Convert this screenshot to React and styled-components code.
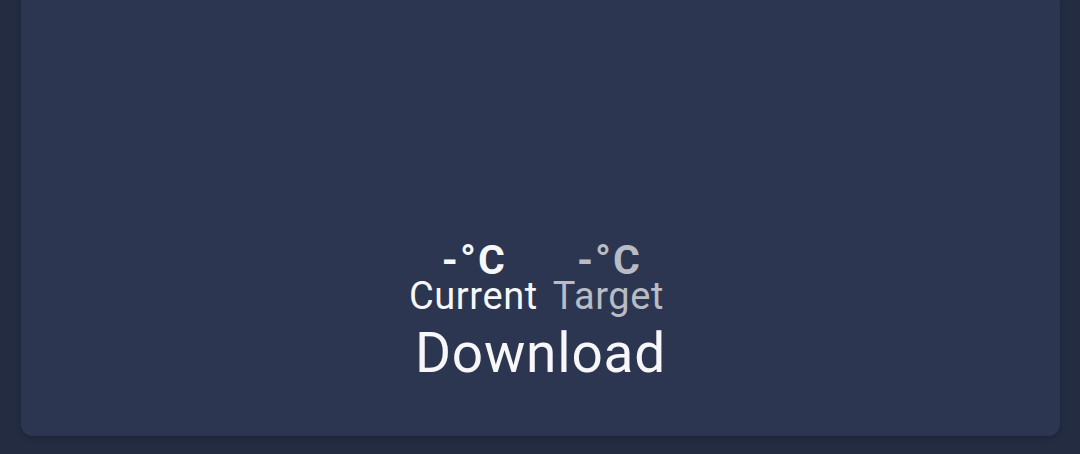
import React from 'react'
import styled, { createGlobalStyle } from 'styled-components'

const GlobalStyle = createGlobalStyle`
	html, body {
		margin: 0;
		padding: 0;
		background: #232c41;
		font-family: Roboto, "Noto Sans", "Liberation Sans", sans-serif;
	}
`

const Page = styled.div`
	width: 1080px;
	height: 454px;
	box-sizing: border-box;
	padding: 0 20px 18px 21px;
	display: flex;
	overflow: hidden;
`

const Card = styled.div`
	flex: 1;
	margin-top: -10px;
	border-radius: 12px;
	background: #2c3650;
	box-shadow: 0 2px 6px rgba(0, 0, 0, 0.18);
	display: flex;
	flex-direction: column;
	align-items: center;
	justify-content: flex-end;
	padding-bottom: 55px;
`

const Readings = styled.div`
	display: flex;
	gap: 15px;
	padding-right: 8px;
`

const Reading = styled.div`
	display: flex;
	flex-direction: column;
	align-items: center;
	color: ${(p) => (p.$muted ? '#b9bcc5' : '#f7f7f9')};
`

const Value = styled.div`
	font-size: 41px;
	font-weight: 700;
	line-height: 40px;
	letter-spacing: 2px;
	padding-left: 2px;
`

const Label = styled.div`
	font-size: 38px;
	line-height: 32px;
	letter-spacing: 0.6px;
`

const Action = styled.div`
	margin-top: 13px;
	font-size: 55px;
	line-height: 56px;
	letter-spacing: 0.8px;
	color: #f7f7f9;
`

const App = () => {
	return (
		<>
			<GlobalStyle />
			<Page>
				<Card>
					<Readings>
						<Reading>
							<Value>-°C</Value>
							<Label>Current</Label>
						</Reading>
						<Reading $muted>
							<Value>-°C</Value>
							<Label>Target</Label>
						</Reading>
					</Readings>
					<Action>Download</Action>
				</Card>
			</Page>
		</>
	)
}

export default App
